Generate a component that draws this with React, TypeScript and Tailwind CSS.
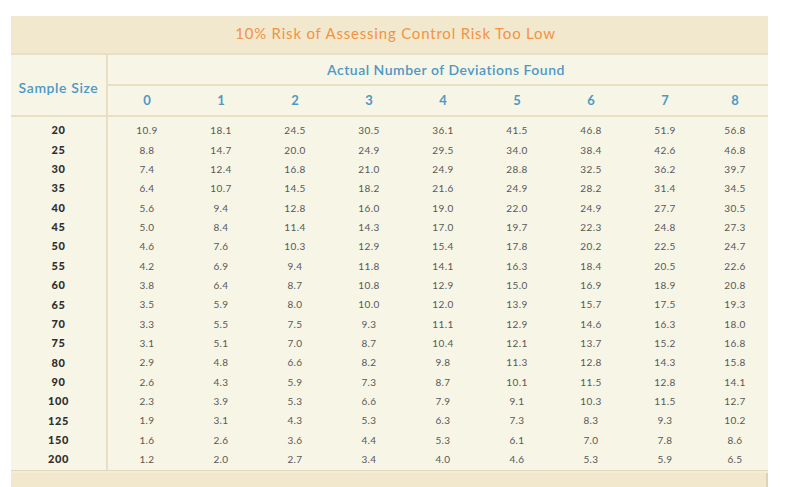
const deviations = ["0", "1", "2", "3", "4", "5", "6", "7", "8"];

const rows: [string, string[]][] = [
  ["20", ["10.9", "18.1", "24.5", "30.5", "36.1", "41.5", "46.8", "51.9", "56.8"]],
  ["25", ["8.8", "14.7", "20.0", "24.9", "29.5", "34.0", "38.4", "42.6", "46.8"]],
  ["30", ["7.4", "12.4", "16.8", "21.0", "24.9", "28.8", "32.5", "36.2", "39.7"]],
  ["35", ["6.4", "10.7", "14.5", "18.2", "21.6", "24.9", "28.2", "31.4", "34.5"]],
  ["40", ["5.6", "9.4", "12.8", "16.0", "19.0", "22.0", "24.9", "27.7", "30.5"]],
  ["45", ["5.0", "8.4", "11.4", "14.3", "17.0", "19.7", "22.3", "24.8", "27.3"]],
  ["50", ["4.6", "7.6", "10.3", "12.9", "15.4", "17.8", "20.2", "22.5", "24.7"]],
  ["55", ["4.2", "6.9", "9.4", "11.8", "14.1", "16.3", "18.4", "20.5", "22.6"]],
  ["60", ["3.8", "6.4", "8.7", "10.8", "12.9", "15.0", "16.9", "18.9", "20.8"]],
  ["65", ["3.5", "5.9", "8.0", "10.0", "12.0", "13.9", "15.7", "17.5", "19.3"]],
  ["70", ["3.3", "5.5", "7.5", "9.3", "11.1", "12.9", "14.6", "16.3", "18.0"]],
  ["75", ["3.1", "5.1", "7.0", "8.7", "10.4", "12.1", "13.7", "15.2", "16.8"]],
  ["80", ["2.9", "4.8", "6.6", "8.2", "9.8", "11.3", "12.8", "14.3", "15.8"]],
  ["90", ["2.6", "4.3", "5.9", "7.3", "8.7", "10.1", "11.5", "12.8", "14.1"]],
  ["100", ["2.3", "3.9", "5.3", "6.6", "7.9", "9.1", "10.3", "11.5", "12.7"]],
  ["125", ["1.9", "3.1", "4.3", "5.3", "6.3", "7.3", "8.3", "9.3", "10.2"]],
  ["150", ["1.6", "2.6", "3.6", "4.4", "5.3", "6.1", "7.0", "7.8", "8.6"]],
  ["200", ["1.2", "2.0", "2.7", "3.4", "4.0", "4.6", "5.3", "5.9", "6.5"]],
];

export default function App() {
  return (
    <div className="h-[487px] w-[802px] overflow-hidden bg-white pl-[11px] pt-[16px] font-['Lato',sans-serif]">
      <div className="w-[757px] bg-[#f7f5e6]">
        <div className="flex h-[39px] items-center justify-center border-b-2 border-[#e8dfc4] bg-[#f1e8ce] pl-[12px] pb-[2px] text-[15px] tracking-[0.8px] text-[#f4933f]">
          10% Risk of Assessing Control Risk Too Low
        </div>

        <div className="flex border-b-2 border-[#e8dfc4]">
          <div className="flex w-[97px] items-center justify-center border-r-2 border-[#e8dfc4] pt-[4px] text-[14px] font-semibold tracking-[0.6px] text-[#4e98c4]">
            Sample Size
          </div>
          <div className="flex-1">
            <div className="flex h-[31px] items-center justify-center border-b-2 border-[#e8dfc4] pl-[16px] text-[14px] font-semibold tracking-[0.5px] text-[#4e98c4]">
              Actual Number of Deviations Found
            </div>
            <div className="grid h-[29px] grid-cols-[repeat(8,74px)_1fr] items-center pl-[2px] text-[13px] font-bold text-[#4e98c4]">
              {deviations.map((d) => (
                <span key={d} className="text-center">
                  {d}
                </span>
              ))}
            </div>
          </div>
        </div>

        <div className="flex flex-col">
          {rows.map(([size, values], i) => (
            <div key={size} className="flex">
              <div
                className={`flex w-[97px] items-center justify-center border-r-2 border-[#e8dfc4] text-[11px] font-black tracking-[0.6px] text-[#2f2f2f] ${
                  i === 0 ? "h-[23.35px] pt-[4px]" : i === rows.length - 1 ? "h-[20.35px] pb-[1px]" : "h-[19.35px]"
                }`}
              >
                {size}
              </div>
              <div
                className={`grid flex-1 grid-cols-[repeat(8,74px)_1fr] items-center pl-[2px] text-[10px] tracking-[0.4px] text-[#585858] ${
                  i === 0 ? "pt-[4px]" : i === rows.length - 1 ? "pb-[1px]" : ""
                }`}
              >
                {values.map((v, j) => (
                  <span key={j} className="text-center">
                    {v}
                  </span>
                ))}
              </div>
            </div>
          ))}
        </div>

        <div className="h-[3px] border-t border-[#e2d8bb] bg-[#f3ecd6]" />
        <div className="h-[15px] border-r-2 border-[#ddd3b5] bg-[#f1e8ce]" />
      </div>
    </div>
  );
}
